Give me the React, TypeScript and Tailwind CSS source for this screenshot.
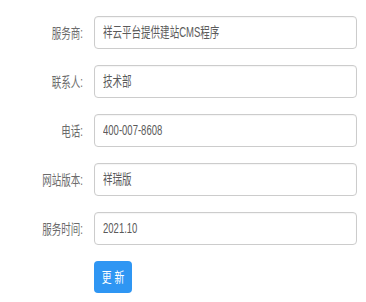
import React from "react";

const rows: { label: string; value: string }[] = [
  { label: "服务商:", value: "祥云平台提供建站CMS程序" },
  { label: "联系人:", value: "技术部" },
  { label: "电话:", value: "400-007-8608" },
  { label: "网站版本:", value: "祥瑞版" },
  { label: "服务时间:", value: "2021.10" },
];

export default function App() {
  return (
    <div
      className="w-[366px] h-[302px] bg-white pt-4"
      style={{ fontFamily: '"Liberation Sans", "Noto Sans CJK SC", sans-serif' }}
    >
      <div className="flex flex-col gap-4">
        {rows.map((r) => (
          <div key={r.label} className="flex items-center">
            <div className="w-[83px] text-right text-[14px] leading-none text-[#6b6b6b] whitespace-nowrap">
              <span className="inline-block origin-right scale-x-[0.68]">{r.label}</span>
            </div>
            <div className="ml-[11px] w-[263px] h-[33px] border border-[#ccc] rounded-[4px] flex items-center pl-[8px] text-[14px] text-[#5a5a5a] whitespace-nowrap overflow-hidden shadow-[inset_0_1px_1px_rgba(0,0,0,0.04)]">
              <span className="inline-block origin-left scale-x-[0.68]">{r.value}</span>
            </div>
          </div>
        ))}
        <div className="flex">
          <div className="ml-[94px] w-[38px] h-[32px] rounded-[4px] bg-[#2f96f3] text-white text-[14px] flex items-center justify-center whitespace-nowrap">
            <span className="inline-block scale-x-[0.7] tracking-[4px] pl-[4px]">更新</span>
          </div>
        </div>
      </div>
    </div>
  );
}
